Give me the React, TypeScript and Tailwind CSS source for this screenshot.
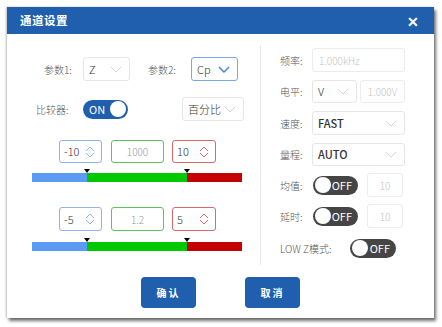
import React from "react";

const font = { fontFamily: '"Noto Sans CJK SC", "Noto Sans", sans-serif' };

const Chevron = ({ blue }: { blue?: boolean }) => (
  <svg width="12" height="7" viewBox="0 0 12 7" fill="none">
    <path
      d="M1 1 L6 6 L11 1"
      stroke={blue ? "#3f7fd6" : "#d4d4d4"}
      strokeWidth={blue ? 1.4 : 1}
    />
  </svg>
);

const Spin = ({ color }: { color: string }) => (
  <svg width="10" height="12" viewBox="0 0 10 12" fill="none">
    <path d="M1 5 L5 1 L9 5" stroke={color} strokeWidth="1" />
    <path d="M1 7 L5 11 L9 7" stroke={color} strokeWidth="1" />
  </svg>
);

const Select = ({
  value,
  w,
  h = "h-[24px]",
  blue,
  bold,
}: {
  value: string;
  w: string;
  h?: string;
  blue?: boolean;
  bold?: boolean;
}) => (
  <div
    className={`${w} ${h} flex items-center justify-between pl-[5px] pr-[7px] rounded-[3px] border ${
      blue ? "border-[#7aa6e6]" : "border-[#e6e6e6]"
    } bg-white`}
  >
    <span className={`text-[11px] text-[#333] ${bold ? "font-medium" : "font-light"}`}>{value}</span>
    <Chevron blue={blue} />
  </div>
);

const Toggle = ({ on, w = "w-[45px]", h = "h-[19px]" }: { on?: boolean; w?: string; h?: string }) => (
  <div
    className={`${w} ${h} rounded-full flex items-center px-[2px] ${
      on ? "bg-[#1f5fae] justify-between" : "bg-[#454545] justify-between"
    }`}
  >
    {on ? (
      <>
        <span className="text-[11px] text-white pl-[4px] leading-none">ON</span>
        <span className="w-[16px] h-[16px] rounded-full bg-white" />
      </>
    ) : (
      <>
        <span className="w-[16px] h-[16px] rounded-full bg-white" />
        <span className="text-[11px] text-white pr-[4px] leading-none">OFF</span>
      </>
    )}
  </div>
);

const Field = ({ value, w, h = "h-[24px]", center }: { value: string; w: string; h?: string; center?: boolean }) => (
  <div
    className={`${w} ${h} flex items-center ${center ? "justify-center" : "pl-[6px]"} rounded-[3px] border border-[#ececec] text-[10px] font-light text-[#c4c4c4]`}
  >
    {value}
  </div>
);

const Limits = ({ lo, mid, hi, tall }: { lo: string; mid: string; hi: string; tall?: boolean }) => {
  const h = tall ? "h-[24px]" : "h-[23px]";
  return (
    <div className="flex pl-[52px]">
      <div className={`w-[43px] ${h} flex items-center justify-between pl-[4px] pr-[6px] rounded-[3px] border border-[#8eb2ea]`}>
        <span className="text-[11px] font-light text-[#333]">{lo}</span>
        <Spin color="#8eb2ea" />
      </div>
      <div className={`ml-[9px] w-[53px] ${h} flex items-center justify-center rounded-[3px] border border-[#5cc45c] text-[10px] font-light text-[#999]`}>
        {mid}
      </div>
      <div className={`ml-[8px] w-[44px] ${h} flex items-center justify-between pl-[4px] pr-[6px] rounded-[3px] border border-[#d46a6a]`}>
        <span className="text-[11px] font-light text-[#333]">{hi}</span>
        <Spin color="#d46a6a" />
      </div>
    </div>
  );
};

const Bar = () => (
  <div className="pl-[25px]">
    <div className="relative w-[210px] h-[9px] flex">
      <div className="w-[55px] bg-[#5b9bf4]" />
      <div className="w-[100px] bg-[#00c800]" />
      <div className="w-[55px] bg-[#c40000]" />
      <span className="absolute left-[52px] -top-[4px] w-0 h-0 border-l-[3px] border-r-[3px] border-t-[4px] border-l-transparent border-r-transparent border-t-black" />
      <span className="absolute left-[152px] -top-[4px] w-0 h-0 border-l-[3px] border-r-[3px] border-t-[4px] border-l-transparent border-r-transparent border-t-black" />
    </div>
  </div>
);

const Label = ({ children, w = "w-[32px]" }: { children: React.ReactNode; w?: string }) => (
  <span className={`${w} text-[10px] font-light text-[#555] shrink-0`}>{children}</span>
);

export default function App() {
  return (
    <div className="w-[442px] h-[327px] bg-white pt-[7px] pl-[7px]" style={font}>
      <div className="w-[427px] h-[311px] bg-white flex flex-col shadow-[-1px_0_2px_rgba(0,0,0,0.25),2px_3px_3px_rgba(0,0,0,0.55)]">
        {/* header */}
        <div className="h-[27px] bg-[#1f5fae] flex items-center justify-between pl-[13px] pr-[15px] text-white">
          <span className="text-[11.5px] font-bold tracking-[0.5px]">通道设置</span>
          <span className="text-[14px] font-bold leading-none">✕</span>
        </div>

        <div className="flex mt-[11px] h-[220px]">
          {/* left */}
          <div className="w-[253px] flex flex-col pt-[12px]">
            <div className="flex items-center pl-[37px] h-[24px]">
              <Label w="w-[39px]">参数1:</Label>
              <Select value="Z" w="w-[47px]" />
              <span className="ml-[18px] w-[43px] text-[10px] font-light text-[#555]">参数2:</span>
              <Select value="Cp" w="w-[47px]" blue />
            </div>
            <div className="flex items-center pl-[29px] h-[24px] mt-[16px]">
              <Label w="w-[47px]">比较器:</Label>
              <Toggle on />
              <div className="ml-[54px]">
                <Select value="百分比" w="w-[62px]" />
              </div>
            </div>
            <div className="mt-[19px]">
              <Limits lo="-10" mid="1000" hi="10" />
            </div>
            <div className="mt-[10px]">
              <Bar />
            </div>
            <div className="mt-[25px]">
              <Limits lo="-5" mid="1.2" hi="5" tall />
            </div>
            <div className="mt-[11px]">
              <Bar />
            </div>
          </div>

          {/* right */}
          <div className="w-[174px] border-l border-[#e8e8e8] flex flex-col pl-[19px] pt-[3px]">
            <div className="flex items-center h-[24px]">
              <Label>频率:</Label>
              <Field value="1.000kHz" w="w-[93px]" />
            </div>
            <div className="flex items-center h-[23px] mt-[8px]">
              <Label>电平:</Label>
              <Select value="V" w="w-[45px]" h="h-[23px]" />
              <div className="ml-[3px]">
                <Field value="1.000V" w="w-[45px]" h="h-[23px]" center />
              </div>
            </div>
            <div className="flex items-center h-[24px] mt-[8px]">
              <Label>速度:</Label>
              <Select value="FAST" w="w-[93px]" bold />
            </div>
            <div className="flex items-center h-[23px] mt-[8px]">
              <Label>量程:</Label>
              <Select value="AUTO" w="w-[93px]" h="h-[23px]" bold />
            </div>
            <div className="flex items-center h-[24px] mt-[7px]">
              <Label>均值:</Label>
              <div className="ml-[1px]">
                <Toggle />
              </div>
              <div className="ml-[9px]">
                <Field value="10" w="w-[36px]" center />
              </div>
            </div>
            <div className="flex items-center h-[24px] mt-[7px]">
              <Label>延时:</Label>
              <div className="ml-[1px]">
                <Toggle />
              </div>
              <div className="ml-[9px]">
                <Field value="10" w="w-[36px]" center />
              </div>
            </div>
            <div className="flex items-center h-[20px] mt-[10px]">
              <Label w="w-[70px]">LOW Z模式:</Label>
              <Toggle w="w-[46px]" h="h-[19px]" />
            </div>
          </div>
        </div>

        {/* footer */}
        <div className="flex justify-center gap-[49px] mt-[12px]">
          <button className="w-[55px] h-[31px] rounded-[4px] bg-[#1f5fae] text-white text-[10px] font-bold tracking-[2px]">
            确认
          </button>
          <button className="w-[55px] h-[31px] rounded-[4px] bg-[#1f5fae] text-white text-[10px] font-bold tracking-[2px]">
            取消
          </button>
        </div>
      </div>
    </div>
  );
}
